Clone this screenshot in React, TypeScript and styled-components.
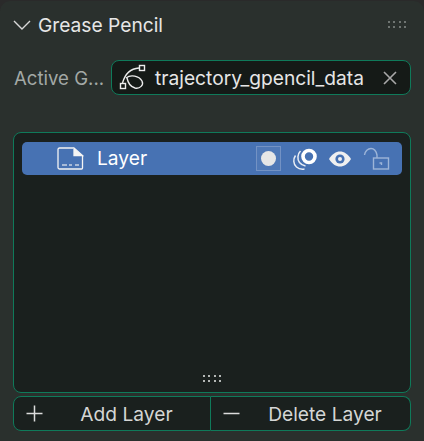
import styled, { createGlobalStyle } from "styled-components";

const GlobalStyle = createGlobalStyle`
  html, body {
    margin: 0;
    padding: 0;
    background: #262626;
  }
  * {
    box-sizing: border-box;
  }
`;

const Panel = styled.div`
  width: 424px;
  height: 441px;
  padding: 1px 0 0;
  background: #2a2a2a;
  font-family: Inter, "Liberation Sans", sans-serif;
  font-size: 19.2px;
`;

const PanelBody = styled.div`
  height: 440px;
  background: #2a302d;
  border-radius: 10px 10px 0 0;
  padding: 0 13px;
  display: flex;
  flex-direction: column;
`;

const Header = styled.div`
  height: 49px;
  display: flex;
  align-items: center;
  gap: 7px;
  padding: 0 5px 2px 0;
  color: #e6e6e6;
`;

const Title = styled.span`
  flex: 1;
`;

const GripGrid = styled.div<{ $cols: number }>`
  display: grid;
  grid-template-columns: repeat(${(p) => p.$cols}, 2px);
  gap: 3.3px;
`;

const GripDot = styled.i<{ $light?: boolean }>`
  width: 2px;
  height: 2px;
  background: ${(p) => (p.$light ? "#b4b8b6" : "#6f7572")};
`;

const FieldRow = styled.div`
  margin-top: 10px;
  height: 35px;
  display: flex;
  align-items: center;
`;

const FieldLabel = styled.span`
  width: 98px;
  padding-left: 1px;
  color: #a3a9a6;
  font-size: 18.6px;
  white-space: nowrap;
`;

const FieldBox = styled.div`
  flex: 1;
  height: 35px;
  display: flex;
  align-items: center;
  padding: 0 12px 0 7px;
  gap: 9px;
  background: #151a17;
  border: 1px solid #0f7a5a;
  border-radius: 8px;
  color: #e6e6e6;
`;

const FieldText = styled.span`
  flex: 1;
  white-space: nowrap;
`;

const ListBox = styled.div`
  margin-top: 37px;
  height: 261px;
  padding: 9px 8px 0;
  display: flex;
  flex-direction: column;
  background: #1a201e;
  border: 1px solid #0f7a5a;
  border-radius: 8px;
`;

const LayerRow = styled.div`
  height: 33px;
  display: flex;
  align-items: center;
  padding: 0 12px 0 35px;
  background: #4772b3;
  border-radius: 5px;
  color: #ffffff;
`;

const LayerName = styled.span`
  flex: 1;
  margin-left: 13px;
  padding-bottom: 2px;
`;

const RowIcons = styled.div`
  display: flex;
  align-items: center;
  gap: 11px;
`;

const MaskToggle = styled.div`
  width: 25px;
  height: 25px;
  display: flex;
  align-items: center;
  justify-content: center;
  background: #4f78b6;
  border: 1px solid #7392c4;
`;

const MaskDot = styled.div`
  width: 15px;
  height: 15px;
  border-radius: 50%;
  background: #e6e6e6;
`;

const ListGrip = styled.div`
  margin-top: auto;
  margin-bottom: 10px;
  align-self: center;
`;

const ButtonRow = styled.div`
  margin-top: 3px;
  height: 35px;
  display: flex;
`;

const ActionButton = styled.div<{ $side: "left" | "right" }>`
  width: ${(p) => (p.$side === "left" ? "198px" : "200px")};
  height: 35px;
  display: flex;
  align-items: center;
  padding-left: 12px;
  background: #1a201e;
  border: 1px solid #0f7a5a;
  border-left-width: ${(p) => (p.$side === "left" ? "1px" : "0")};
  border-radius: ${(p) => (p.$side === "left" ? "8px 0 0 8px" : "0 8px 8px 0")};
  color: #d4d6d5;
`;

const ActionLabel = styled.span`
  flex: 1;
  text-align: center;
`;

function Grip({ cols, light }: { cols: number; light?: boolean }) {
  return (
    <GripGrid $cols={cols}>
      {Array.from({ length: cols * 2 }, (_, i) => (
        <GripDot key={i} $light={light} />
      ))}
    </GripGrid>
  );
}

export default function App() {
  return (
    <Panel>
      <GlobalStyle />
      <PanelBody>
        <Header>
          <svg width="18" height="12" viewBox="0 0 18 12" fill="none" stroke="#d8d8d8" strokeWidth="1.4">
            <path d="M1 2l8 8 8-8" />
          </svg>
          <Title>Grease Pencil</Title>
          <Grip cols={4} />
        </Header>
        <FieldRow>
          <FieldLabel>Active G...</FieldLabel>
          <FieldBox>
            <svg width="27" height="27" viewBox="0 0 27 27" fill="none" stroke="#ececec" strokeWidth="1.4">
              <rect x="20.5" y="1.500" width="5" height="5" />
              <rect x="1.500" y="19.500" width="5" height="5" />
              <path d="M20 4C12 4.500 6 10 3.500 19" />
              <path d="M7 14C12 10 20 12 23 17c2 4-2 8-7 7-4-1-7-5-8-10" />
            </svg>
            <FieldText>trajectory_gpencil_data</FieldText>
            <svg width="16" height="16" viewBox="0 0 16 16" fill="none" stroke="#a8a8a8" strokeWidth="1.6">
              <path d="M2 2l12 12M14 2L2 14" />
            </svg>
          </FieldBox>
        </FieldRow>
        <ListBox>
          <LayerRow>
            <svg width="27" height="23" viewBox="0 0 27 23" fill="none" stroke="#f4f4f4" strokeWidth="1.3">
              <path d="M16.500 1H2.500A1.500 1.500 0 0 0 1 2.500v18A1.500 1.500 0 0 0 2.500 22h22a1 1 0 0 0 1-1V9" />
              <path d="M17 1l8.500 7.500H17z" fill="#f4f4f4" />
              <path d="M5 18h5M12 18h3M18 18h4" stroke="#c8d2e4" />
            </svg>
            <LayerName>Layer</LayerName>
            <RowIcons>
              <MaskToggle>
                <MaskDot />
              </MaskToggle>
              <svg width="25" height="26" viewBox="0 0 25 26" fill="none">
                <circle cx="17" cy="10.500" r="6" stroke="#ffffff" strokeWidth="3.600" />
                <path d="M8.500 5C5.500 8 5 13 7.500 16.500c1.500 2 3.500 3 6 3.500" stroke="#e8edf5" strokeWidth="1.500" />
                <path d="M3.500 9.500C1 13 1.200 18 4.500 21c2 1.800 5 2.500 8 2" stroke="#e8edf5" strokeWidth="1.500" />
              </svg>
              <svg width="24" height="18" viewBox="0 0 24 18" fill="none">
                <path d="M1 9c3-5 7-7.500 11-7.500S20 4 23 9c-3 5-7 7.500-11 7.500S4 14 1 9z" fill="#f0f0f0" />
                <circle cx="12" cy="9" r="4.600" fill="#4772b3" />
                <circle cx="12" cy="9" r="2" fill="#f0f0f0" />
              </svg>
              <svg width="27" height="24" viewBox="0 0 27 24" fill="none" stroke="#9db5d8" strokeWidth="1.400">
                <path d="M1.500 8C2 4 5 1.500 8 1.500S13 3.500 14 8v3" />
                <rect x="10.500" y="11" width="15" height="11" />
                <path d="M16.500 16h2v2" />
              </svg>
            </RowIcons>
          </LayerRow>
          <ListGrip>
            <Grip cols={4} light />
          </ListGrip>
        </ListBox>
        <ButtonRow>
          <ActionButton $side="left">
            <svg width="17" height="17" viewBox="0 0 17 17" stroke="#dcdcdc" strokeWidth="1.500">
              <path d="M8.500 .5v16M.5 8.500h16" />
            </svg>
            <ActionLabel>Add Layer</ActionLabel>
          </ActionButton>
          <ActionButton $side="right">
            <svg width="17" height="17" viewBox="0 0 17 17" stroke="#dcdcdc" strokeWidth="1.500">
              <path d="M.5 8.500h16" />
            </svg>
            <ActionLabel>Delete Layer</ActionLabel>
          </ActionButton>
        </ButtonRow>
      </PanelBody>
    </Panel>
  );
}
